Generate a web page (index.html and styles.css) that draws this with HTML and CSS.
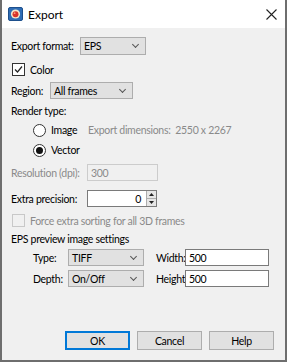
FILE: index.html
```html
<!DOCTYPE html>
<html lang="en">
<head>
  <meta charset="UTF-8" />
  <title>Export</title>
  <link rel="stylesheet" href="styles.css">
</head>
<body>

<div class="dialog">
  <div class="titlebar">
    <svg class="app-icon" width="15" height="14" viewBox="0 0 15 14">
      <rect x="0.5" y="0.5" width="14" height="13" rx="1.5" fill="#2f6db5" stroke="#1d4f8c"/>
      <circle cx="7.5" cy="7" r="4.6" fill="#f4e7c8"/>
      <circle cx="7.5" cy="7.3" r="3" fill="#d8342a"/>
      <circle cx="6.6" cy="6.2" r="0.9" fill="#f7a07a"/>
    </svg>
    <span class="title">Export</span>
    <svg class="close" width="11" height="11" viewBox="0 0 11 11">
      <path d="M0.5 0.5 L10.5 10.5 M10.5 0.5 L0.5 10.5" stroke="#222" stroke-width="1.1"/>
    </svg>
  </div>

  <div class="content">
    <div class="row row-format">
      <span class="lbl lbl-format">Export format:</span>
      <div class="select sel-format">EPS<span class="chev"></span></div>
    </div>

    <div class="row row-color">
      <span class="box">
        <svg width="11" height="11" viewBox="0 0 11 11"><path d="M2 5.5 L4.5 8 L9 2.5" fill="none" stroke="#222" stroke-width="1.2"/></svg>
      </span>
      <span>Color</span>
    </div>

    <div class="row row-region">
      <span class="lbl lbl-region">Region:</span>
      <div class="select sel-region">All frames<span class="chev"></span></div>
    </div>

    <div class="row row-render">Render type:</div>

    <div class="row row-radio row-image">
      <span class="radio"></span>
      <span class="radio-text">Image</span>
      <span class="muted dims">Export dimensions:&nbsp; 2550 x 2267</span>
    </div>

    <div class="row row-radio row-vector">
      <span class="radio on"></span>
      <span class="radio-text">Vector</span>
    </div>

    <div class="row row-res">
      <span class="lbl lbl-num muted">Resolution (dpi):</span>
      <div class="input disabled res">300</div>
    </div>

    <div class="row row-extra">
      <span class="lbl lbl-num">Extra precision:</span>
      <div class="input spin">
        <span class="spin-val">0</span>
        <span class="spin-btns">
          <span class="spin-btn"><svg width="5" height="3" viewBox="0 0 5 3"><path d="M0 3 L2.5 0 L5 3Z" fill="#222"/></svg></span>
          <span class="spin-btn"><svg width="5" height="3" viewBox="0 0 5 3"><path d="M0 0 L2.5 3 L5 0Z" fill="#222"/></svg></span>
        </span>
      </div>
    </div>

    <div class="row row-force muted">
      <span class="box disabled"></span>
      <span>Force extra sorting for all 3D frames</span>
    </div>

    <div class="row row-eps">EPS preview image settings</div>

    <div class="row row-preview row-type">
      <span class="lbl lbl-sub">Type:</span>
      <div class="select sel-sub">TIFF<span class="chev"></span></div>
      <span class="lbl lbl-dim">Width:</span>
      <div class="input dim">500</div>
    </div>

    <div class="row row-preview row-depth">
      <span class="lbl lbl-sub">Depth:</span>
      <div class="select sel-sub">On/Off<span class="chev"></span></div>
      <span class="lbl lbl-dim">Height:</span>
      <div class="input dim">500</div>
    </div>

    <div class="buttons">
      <button class="btn default">OK</button>
      <button class="btn">Cancel</button>
      <button class="btn">Help</button>
    </div>
  </div>
</div>

</body>
</html>
```

FILE: styles.css
```css
* { margin: 0; padding: 0; box-sizing: border-box; }

html, body {
  width: 287px;
  height: 362px;
  overflow: hidden;
  background: #f0f0f0;
  font-family: Lato, "Noto Sans", sans-serif;
  font-size: 10.5px;
  letter-spacing: -0.3px;
  color: #000;
}

.dialog {
  width: 287px;
  height: 362px;
  display: flex;
  flex-direction: column;
  border-left: 2px solid #6e6e6e;
  border-right: 2px solid #6e6e6e;
  border-bottom: 2px solid #6e6e6e;
  background: #f0f0f0;
}

/* title bar */
.titlebar {
  height: 28px;
  background: #fff;
  display: flex;
  align-items: center;
  padding-left: 6px;
  padding-right: 8px;
}

.app-icon { margin-right: 5px; }

.title {
  font-size: 12px;
  letter-spacing: 0;
  flex: 1;
}

.close { margin-top: 1px; }

/* body */
.content {
  flex: 1;
  display: flex;
  flex-direction: column;
  padding: 0 0 10px 9px;
}

.row {
  display: flex;
  align-items: center;
  white-space: nowrap;
}

.lbl { flex: none; }

.muted { color: #8a8a8a; }

.row-format { margin-top: 9px; height: 18px; }
.lbl-format { width: 69px; }
.sel-format { width: 66px; }

.row-color { margin-top: 8px; height: 13px; }
.row-region { margin-top: 6px; height: 17px; }
.lbl-region { width: 39px; }
.sel-region { width: 83px; }

.row-render { margin-top: 5px; height: 14px; }
.row-image { margin-top: 5px; }
.row-vector { margin-top: 6px; }
.row-radio { height: 14px; padding-left: 22px; }

.row-res { margin-top: 7px; height: 17px; }
.row-extra { margin-top: 9px; height: 17px; }
.lbl-num { width: 76px; }

.row-force { margin-top: 7px; height: 13px; }
.row-eps { margin-top: 5px; height: 14px; }

.row-preview { height: 17px; padding-left: 22px; }
.row-type { margin-top: 3px; }
.row-depth { margin-top: 4px; }
.lbl-sub { width: 35px; }
.sel-sub { width: 76px; }
.lbl-dim { width: 29px; margin-left: 12px; }

/* checkbox */
.box {
  width: 13px;
  height: 13px;
  border: 1px solid #333;
  background: #fff;
  margin: 0 5px 0 1px;
  display: flex;
  align-items: center;
  justify-content: center;
}

.box.disabled { border-color: #c8c8c8; background: #f0f0f0; }

/* radio */
.radio {
  width: 13px;
  height: 13px;
  border: 1px solid #333;
  border-radius: 50%;
  background: #fff;
  margin-right: 5px;
  display: flex;
  align-items: center;
  justify-content: center;
}

.radio.on::after {
  content: "";
  width: 7px;
  height: 7px;
  border-radius: 50%;
  background: #111;
}

.radio-text { width: 37px; }

/* combo boxes */
.select {
  height: 100%;
  background: #e1e1e1;
  border: 1px solid #adadad;
  display: flex;
  align-items: center;
  justify-content: space-between;
  padding: 0 7px 0 3px;
}

.chev {
  width: 5px;
  height: 5px;
  border-right: 1px solid #555;
  border-bottom: 1px solid #555;
  transform: rotate(45deg);
  margin-top: -3px;
}

/* edit boxes */
.input {
  height: 100%;
  background: #fff;
  border: 1px solid #7a7a7a;
  display: flex;
  align-items: center;
  padding-left: 3px;
}

.input.disabled {
  background: #f0f0f0;
  border-color: #cccccc;
  color: #8a8a8a;
  width: 71px;
}

.dim { width: 84px; }

.spin {
  width: 70px;
  padding-left: 0;
  justify-content: flex-end;
}

.spin-val { margin-right: 5px; }

.spin-btns {
  width: 10px;
  height: 100%;
  display: flex;
  flex-direction: column;
  border-left: 1px solid #adadad;
}

.spin-btn {
  flex: 1;
  background: #e6e6e6;
  display: flex;
  align-items: center;
  justify-content: center;
}

.spin-btn + .spin-btn { border-top: 1px solid #adadad; }

/* buttons */
.buttons {
  margin-top: auto;
  display: flex;
  justify-content: flex-end;
  gap: 7px;
  padding-right: 11px;
}

.btn {
  width: 65px;
  height: 19px;
  background: #e1e1e1;
  border: 1px solid #adadad;
  font-family: inherit;
  font-size: 10.5px;
  letter-spacing: -0.3px;
  color: #000;
}

.btn.default { border: 2px solid #0078d7; }
```
